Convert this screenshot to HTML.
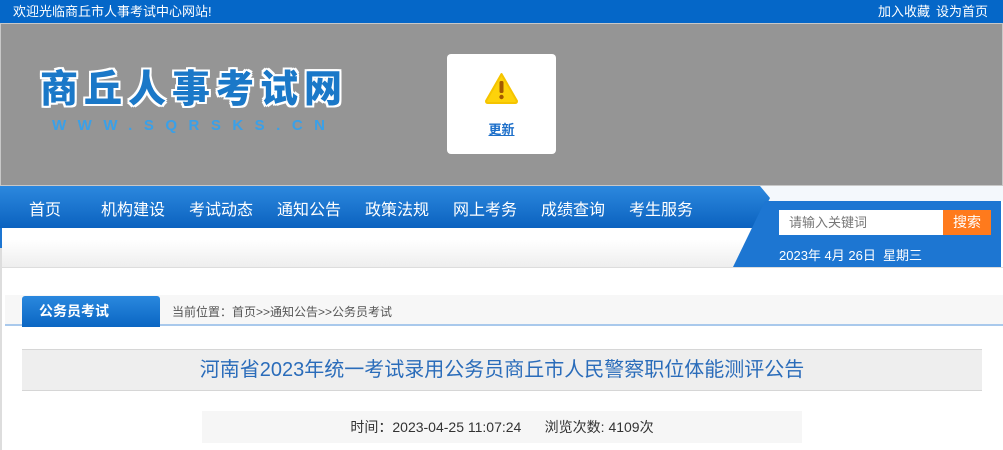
<!DOCTYPE html>
<html><head><meta charset="utf-8"><style>
*{margin:0;padding:0;box-sizing:border-box}
body{width:1003px;height:450px;overflow:hidden;background:#fff;font-family:"Liberation Sans","Noto Sans CJK SC",sans-serif;position:relative}
.abs{position:absolute}
.top{left:0;top:0;width:1003px;height:23px;background:#0567c8;color:#fff;font-size:13px;line-height:23px}
.hdr{left:0;top:23px;width:1003px;height:163px;background:#959595;border:1px solid #c8c8c8}
.logo{left:40px;top:64px;font-size:38px;line-height:44px;font-weight:900;color:#1a78c8;letter-spacing:6px;text-shadow:2px 0 #fff,-2px 0 #fff,0 2px #fff,0 -2px #fff,2px 2px #fff,-2px -2px #fff,2px -2px #fff,-2px 2px #fff;font-family:"Noto Sans CJK SC",sans-serif}
.url{left:52px;top:117px;font-size:15px;font-weight:bold;color:#3aa0e8;letter-spacing:11.5px}
.box{left:447px;top:54px;width:109px;height:100px;background:#fff;border-radius:4px}
.nav{left:0;top:186px;width:770px;height:42px;background:linear-gradient(#2c88de,#0b62bf);clip-path:polygon(0 0,760px 0,770px 12px,755px 42px,0 42px)}
.nav span{position:absolute;top:10px;color:#fff;font-size:16px}
.rp{left:733px;top:201px;width:268px;height:66px;background:#1d76d2;clip-path:polygon(32px 0,100% 0,100% 100%,0 100%)}
.in{left:779px;top:210px;width:164px;height:25px;background:#fff;color:#777;font-size:13px;line-height:25px;padding-left:10px}
.btn{left:943px;top:210px;width:48px;height:25px;background:#ff7a1c;color:#fff;font-size:14px;line-height:25px;text-align:center}
.date{left:779px;top:245px;color:#fff;font-size:13px}
.gr{left:2px;top:240px;width:740px;height:27px;background:linear-gradient(#fff,#eee)}
.bc{left:5px;top:295px;width:998px;height:31px;background:#f7f7f7;border-bottom:2px solid #a9c9ec}
.tab{left:22px;top:296px;width:138px;height:31px;background:linear-gradient(#2a88de,#0b66c3);color:#fff;font-weight:bold;font-size:14px;line-height:31px;padding-left:17px;border-radius:3px 3px 0 0}
.crumb{left:172px;top:303px;color:#555;font-size:12px}
.title{left:22px;top:349px;width:960px;height:42px;background:#eee;border-top:1px solid #d6d6d6;border-bottom:1px solid #d6d6d6;color:#2a6cba;font-size:20px;line-height:40px;text-align:center}
.meta{left:202px;top:411px;width:600px;height:32px;background:#f6f6f6;color:#333;font-size:14px;line-height:32px;text-align:center}
</style></head><body>
<div class="abs top"><span style="position:absolute;left:13px">欢迎光临商丘市人事考试中心网站!</span><span style="position:absolute;left:878px">加入收藏</span><span style="position:absolute;left:936px">设为首页</span></div>
<div class="abs hdr"></div>
<div class="abs logo">商丘人事考试网</div>
<div class="abs url">WWW.SQRSKS.CN</div>
<div class="abs box"><svg style="position:absolute;left:37px;top:18px" width="35" height="32" viewBox="0 0 35 32"><path d="M17.5 2 L33 29 Q33 31 31 31 L4 31 Q2 31 2 29 Z" fill="#fdd20a" stroke="#f5c400" stroke-linejoin="round" stroke-width="2"/><rect x="15.5" y="9" width="4" height="12" rx="1.5" fill="#a35a00"/><circle cx="17.5" cy="25" r="2.2" fill="#a35a00"/></svg><div style="position:absolute;left:0;width:109px;top:65px;text-align:center;font-size:13px;font-weight:bold;color:#1d6fc9;text-decoration:underline">更新</div></div>
<div class="abs" style="left:0;top:186px;width:1003px;height:15px;background:#f4f8fc"></div>
<div class="abs gr"></div>
<div class="abs nav"><span style="left:29px">首页</span><span style="left:101px">机构建设</span><span style="left:189px">考试动态</span><span style="left:277px">通知公告</span><span style="left:365px">政策法规</span><span style="left:453px">网上考务</span><span style="left:541px">成绩查询</span><span style="left:629px">考生服务</span></div>
<div class="abs" style="left:0;top:228px;width:2px;height:20px;background:#1d76d2"></div>
<div class="abs rp"></div>
<div class="abs in">请输入关键词</div>
<div class="abs btn">搜索</div>
<div class="abs date">2023年 4月 26日 &nbsp;星期三</div>
<div class="abs" style="left:0;top:267px;width:1003px;height:1px;background:#ddd"></div>
<div class="abs" style="left:0;top:248px;width:2px;height:202px;background:#ddd"></div>
<div class="abs bc"></div>
<div class="abs tab">公务员考试</div>
<div class="abs crumb">当前位置：首页&gt;&gt;通知公告&gt;&gt;公务员考试</div>
<div class="abs title">河南省2023年统一考试录用公务员商丘市人民警察职位体能测评公告</div>
<div class="abs meta">时间：2023-04-25 11:07:24 &nbsp;&nbsp;&nbsp;&nbsp; 浏览次数: 4109次</div>
</body></html>
